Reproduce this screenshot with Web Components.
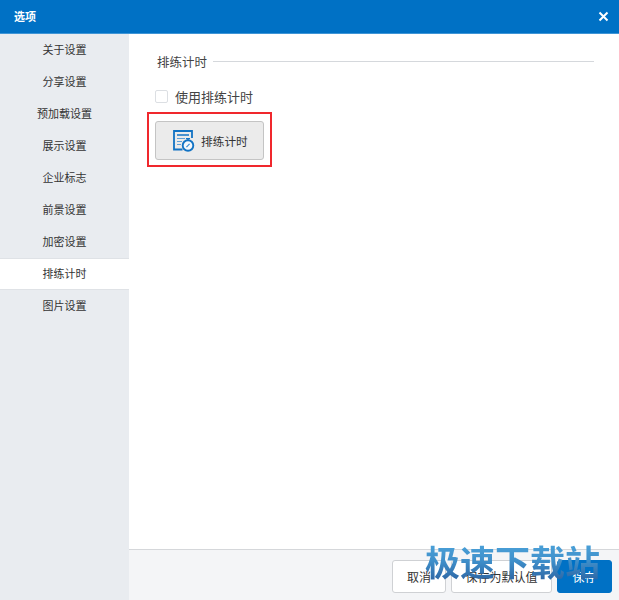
<!DOCTYPE html>
<html lang="zh">
<head>
<meta charset="utf-8">
<title>选项</title>
<style>
  html, body { margin: 0; height: 100%; }
  body { font: 12px "Noto Sans CJK SC", "Liberation Sans", sans-serif; color: #333; overflow: hidden; }
</style>
</head>
<body>
<options-dialog>
  <side-item>关于设置</side-item>
  <side-item>分享设置</side-item>
  <side-item>预加载设置</side-item>
  <side-item>展示设置</side-item>
  <side-item>企业标志</side-item>
  <side-item>前景设置</side-item>
  <side-item>加密设置</side-item>
  <side-item active>排练计时</side-item>
  <side-item>图片设置</side-item>
  <timing-panel slot="content"></timing-panel>
  <foot-button slot="footer" style="width:54px">取消</foot-button>
  <foot-button slot="footer" style="width:101px">保存为默认值</foot-button>
  <foot-button slot="footer" primary style="width:55px">保存</foot-button>
</options-dialog>

<script>
const dialogTpl = document.createElement("template");
dialogTpl.innerHTML = `
  <style>
    :host {
      position: relative;
      display: flex;
      flex-direction: column;
      width: 619px;
      height: 600px;
      background: #fff;
    }
    header {
      box-sizing: border-box;
      height: 34px;
      flex: none;
      display: flex;
      align-items: center;
      justify-content: space-between;
      padding: 0 10px 1px 14px;
      background: #0071c5;
      border-bottom: 1px solid #3f95d6;
      color: #fff;
      font-size: 11px;
      font-weight: 700;
    }
    header svg { display: block; }
    .body { flex: 1; display: flex; min-height: 0; }
    nav {
      width: 129px;
      flex: none;
      display: flex;
      flex-direction: column;
      background: #e9ecf0;
    }
    .main { flex: 1; display: flex; flex-direction: column; min-width: 0; }
    .content { flex: 1; }
    footer {
      box-sizing: border-box;
      height: 51px;
      flex: none;
      display: flex;
      justify-content: flex-end;
      gap: 5px;
      padding: 10px 7px 0 0;
      background: #f4f5f7;
      border-top: 1px solid #d5d7da;
    }
    .mark {
      position: absolute;
      left: 425px;
      top: 538px;
      font-size: 35px;
      line-height: 46px;
      font-weight: 700;
      white-space: nowrap;
      background: linear-gradient(180deg, #4fa8de 0%, #3f8fca 50%, #2a5f9e 100%);
      -webkit-background-clip: text;
      background-clip: text;
      color: transparent;
    }
  </style>
  <header>
    <span>选项</span>
    <svg width="11" height="11" viewBox="0 0 11 11"><path d="M1.5 1.5l8 8M9.5 1.5l-8 8" stroke="#fff" stroke-width="2" fill="none"/></svg>
  </header>
  <div class="body">
    <nav><slot></slot></nav>
    <div class="main">
      <div class="content"><slot name="content"></slot></div>
      <footer><slot name="footer"></slot></footer>
    </div>
  </div>
  <div class="mark">极速下载站</div>
`;

class OptionsDialog extends HTMLElement {
  constructor() {
    super();
    this.attachShadow({ mode: "open" });
    this.shadowRoot.appendChild(dialogTpl.content.cloneNode(true));
  }
}

const itemTpl = document.createElement("template");
itemTpl.innerHTML = `
  <style>
    :host {
      box-sizing: border-box;
      display: flex;
      align-items: center;
      justify-content: center;
      height: 32px;
      padding-bottom: 2px;
      font-size: 11px;
      color: #333;
    }
    :host([active]) {
      background: #fff;
      border-top: 1px solid #dfe2e6;
      border-bottom: 1px solid #dfe2e6;
    }
  </style>
  <slot></slot>
`;

class SideItem extends HTMLElement {
  constructor() {
    super();
    this.attachShadow({ mode: "open" });
    this.shadowRoot.appendChild(itemTpl.content.cloneNode(true));
  }
}

const panelTpl = document.createElement("template");
panelTpl.innerHTML = `
  <style>
    :host {
      display: flex;
      flex-direction: column;
      align-items: flex-start;
      padding: 17px 25px 0 28px;
      color: #444;
    }
    .title {
      align-self: stretch;
      display: flex;
      align-items: center;
      gap: 6px;
      height: 20px;
      font-size: 12.5px;
    }
    .title i { flex: 1; height: 1px; background: #d5d8dc; }
    label {
      display: flex;
      align-items: center;
      gap: 7px;
      height: 20px;
      margin: 15px 0 0 -2px;
      font-size: 13px;
    }
    label b {
      box-sizing: border-box;
      width: 13px;
      height: 13px;
      border: 1px solid #dcdfe3;
      border-radius: 2px;
      background: #fff;
    }
    .shot {
      box-sizing: border-box;
      margin: 6px 0 0 -10px;
      padding: 7px 6px 5px;
      border: 2px solid #f0282d;
    }
    .btn {
      box-sizing: border-box;
      width: 109px;
      height: 39px;
      display: flex;
      align-items: center;
      gap: 6px;
      padding-left: 17px;
      background: #ebebeb;
      border: 1px solid #c4c4c4;
      border-radius: 3px;
      font-size: 11.7px;
      color: #333;
    }
    .btn svg { display: block; flex: none; }
  </style>
  <div class="title"><span>排练计时</span><i></i></div>
  <label><b></b><span>使用排练计时</span></label>
  <div class="shot">
    <div class="btn">
      <svg width="22" height="22" viewBox="0 0 22 22" fill="none">
        <path d="M9.5 19.5H1V1h18v7" stroke="#1273c4" stroke-width="1.8"/>
        <path d="M4 5h12" stroke="#1273c4" stroke-width="1.5"/>
        <path d="M4 8.5h8M4 11.5h5M4 14.5h4" stroke="#5fa0d8" stroke-width="1.2"/>
        <circle cx="15" cy="15.5" r="5.3" fill="#f4f8fc" stroke="#1273c4" stroke-width="1.9"/>
        <path d="M13 8.7h4M15 8.7v1.6" stroke="#1273c4" stroke-width="1.3"/>
        <path d="M13.4 17.1l3.2-3.2" stroke="#3f8fd2" stroke-width="1.3"/>
      </svg>
      <span>排练计时</span>
    </div>
  </div>
`;

class TimingPanel extends HTMLElement {
  constructor() {
    super();
    this.attachShadow({ mode: "open" });
    this.shadowRoot.appendChild(panelTpl.content.cloneNode(true));
  }
}

const buttonTpl = document.createElement("template");
buttonTpl.innerHTML = `
  <style>
    :host {
      box-sizing: border-box;
      display: flex;
      align-items: center;
      justify-content: center;
      height: 33px;
      background: #fff;
      border: 1px solid #cfd1d4;
      border-radius: 3px;
      font-size: 12px;
      color: #333;
    }
    :host([primary]) {
      background: #0071c5;
      border-color: #0071c5;
      color: #fff;
    }
  </style>
  <slot></slot>
`;

class FootButton extends HTMLElement {
  constructor() {
    super();
    this.attachShadow({ mode: "open" });
    this.shadowRoot.appendChild(buttonTpl.content.cloneNode(true));
  }
}

customElements.define("options-dialog", OptionsDialog);
customElements.define("side-item", SideItem);
customElements.define("timing-panel", TimingPanel);
customElements.define("foot-button", FootButton);
</script>
</body>
</html>
